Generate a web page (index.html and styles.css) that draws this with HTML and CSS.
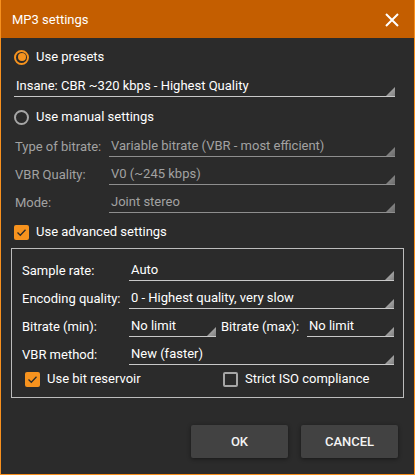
FILE: index.html
```html
<!DOCTYPE html>
<html>
<head>
<meta charset="utf-8">
<link rel="stylesheet" href="styles.css">
</head>
<body>
<div class="window">
  <div class="titlebar">
    <span class="title">MP3 settings</span>
    <svg class="close" width="16" height="16" viewBox="0 0 16 16"><path d="M2 2 L14 14 M14 2 L2 14" stroke="#fff" stroke-width="2" fill="none"/></svg>
  </div>
  <div class="content">
    <div class="section">
      <div class="check-row first">
        <span class="radio on"></span><span class="opt">Use presets</span>
      </div>
      <div class="dd gap10"><span>Insane: CBR ~320 kbps - Highest Quality</span><i></i></div>
      <div class="check-row gap10">
        <span class="radio"></span><span class="opt">Use manual settings</span>
      </div>
      <div class="form-row gap10 disabled">
        <span class="lbl outer">Type of bitrate:</span>
        <div class="dd grow"><span>Variable bitrate (VBR - most efficient)</span><i></i></div>
      </div>
      <div class="form-row gap8 disabled">
        <span class="lbl outer">VBR Quality:</span>
        <div class="dd grow"><span>V0 (~245 kbps)</span><i></i></div>
      </div>
      <div class="form-row gap8 disabled">
        <span class="lbl outer">Mode:</span>
        <div class="dd grow"><span>Joint stereo</span><i></i></div>
      </div>
      <div class="check-row gap9">
        <span class="cb on"><svg width="15" height="15" viewBox="0 0 15 15"><path d="M3.5 7.5 L6.3 10.3 L11.5 4.8" stroke="#2b2b2b" stroke-width="1.3" fill="none"/></svg></span><span class="opt">Use advanced settings</span>
      </div>
    </div>
    <div class="group">
      <div class="form-row">
        <span class="lbl inner">Sample rate:</span>
        <div class="dd grow"><span>Auto</span><i></i></div>
      </div>
      <div class="form-row gap8">
        <span class="lbl inner">Encoding quality:</span>
        <div class="dd grow"><span>0 - Highest quality, very slow</span><i></i></div>
      </div>
      <div class="form-row gap8">
        <span class="lbl inner">Bitrate (min):</span>
        <div class="dd small"><span>No limit</span><i></i></div>
        <span class="lbl max">Bitrate (max):</span>
        <div class="dd grow"><span>No limit</span><i></i></div>
      </div>
      <div class="form-row gap8">
        <span class="lbl inner">VBR method:</span>
        <div class="dd grow"><span>New (faster)</span><i></i></div>
      </div>
      <div class="opts-row">
        <div class="check-row reserve">
          <span class="cb on"><svg width="15" height="15" viewBox="0 0 15 15"><path d="M3.5 7.5 L6.3 10.3 L11.5 4.8" stroke="#2b2b2b" stroke-width="1.3" fill="none"/></svg></span><span class="opt">Use bit reservoir</span>
        </div>
        <div class="check-row">
          <span class="cb"></span><span class="opt">Strict ISO compliance</span>
        </div>
      </div>
    </div>
    <div class="buttons">
      <button class="btn">OK</button>
      <button class="btn">CANCEL</button>
    </div>
  </div>
</div>
</body>
</html>
```
FILE: styles.css
```css
html, body {
  margin: 0;
  padding: 0;
  background: #2b2b2b;
}
body {
  font-family: Roboto, "Liberation Sans", Arial, sans-serif;
  font-size: 13px;
  color: #ffffff;
}
.window {
  width: 415px;
  height: 475px;
  box-sizing: border-box;
  border: 1px solid #f7901e;
  border-top: none;
  background: #2b2b2b;
  display: flex;
  flex-direction: column;
}
.titlebar {
  height: 38px;
  background: #c45e00;
  display: flex;
  align-items: center;
  justify-content: space-between;
  padding: 0 14px 0 11px;
  flex-shrink: 0;
}
.title {
  font-size: 13px;
  color: #fff;
  padding-top: 1px;
}
.close {
  display: block;
  margin-top: 1px;
}
.content {
  display: flex;
  flex-direction: column;
}
.section {
  padding: 0 19px 0 13px;
  display: flex;
  flex-direction: column;
}
.first { margin-top: 9px; }
.gap10 { margin-top: 10px; }
.gap9 { margin-top: 9px; }
.gap8 { margin-top: 8px; }
.check-row {
  height: 20px;
  display: flex;
  align-items: center;
}
.opt {
  margin-left: 7px;
  line-height: 20px;
}
.radio {
  width: 15px;
  height: 15px;
  box-sizing: border-box;
  border-radius: 50%;
  border: 2px solid #a6a6a6;
  flex-shrink: 0;
  position: relative;
}
.radio.on {
  border-color: #f7931e;
}
.radio.on::after {
  content: "";
  position: absolute;
  left: 1.5px;
  top: 1.5px;
  width: 8px;
  height: 8px;
  border-radius: 50%;
  background: #f7931e;
}
.cb {
  width: 15px;
  height: 15px;
  box-sizing: border-box;
  border-radius: 2px;
  border: 2px solid #a6a6a6;
  flex-shrink: 0;
  display: block;
}
.cb.on {
  border: none;
  background: #f7931e;
}
.cb svg { display: block; }
.dd {
  height: 20px;
  box-sizing: border-box;
  border-bottom: 1px solid #c8c8c8;
  position: relative;
  display: flex;
  align-items: flex-start;
}
.dd span {
  line-height: 18px;
  padding-left: 2px;
  white-space: nowrap;
}
.dd i {
  position: absolute;
  right: 0;
  bottom: 0;
  width: 9px;
  height: 9px;
  background: linear-gradient(135deg, #c0c0c0, #808080);
  clip-path: polygon(100% 0, 100% 100%, 0 100%);
}
.grow { flex: 1; }
.form-row {
  display: flex;
  align-items: flex-start;
}
.lbl {
  line-height: 18px;
  flex-shrink: 0;
  padding-top: 1px;
  white-space: nowrap;
}
.lbl.outer { width: 94px; padding-left: 1px; }
.lbl.inner { width: 107px; }
.lbl.max { width: 86px; padding-left: 5px; }
.dd.small { width: 87px; }
.disabled { color: #a2a2a2; }
.disabled .dd { border-bottom-color: #8e8e8e; }
.disabled .dd i { background: linear-gradient(135deg, #9a9a9a, #6a6a6a); }
.group {
  margin: 6px 10px 0 10px;
  border: 1px solid #bcbcbc;
  padding: 12px 9px 8px 10px;
  display: flex;
  flex-direction: column;
}
.opts-row {
  display: flex;
  margin-top: 4px;
  padding-left: 3px;
}
.reserve { width: 198px; }
.buttons {
  display: flex;
  justify-content: flex-end;
  gap: 13px;
  margin-top: 27px;
  padding-right: 16px;
}
.btn {
  width: 97px;
  height: 33px;
  border: none;
  border-radius: 2px;
  background: #424242;
  color: #f4f4f4;
  font-family: Roboto, "Liberation Sans", Arial, sans-serif;
  font-size: 13px;
  font-weight: 500;
  box-shadow: 0 1px 4px rgba(0,0,0,0.45);
  padding: 0;
}
```
